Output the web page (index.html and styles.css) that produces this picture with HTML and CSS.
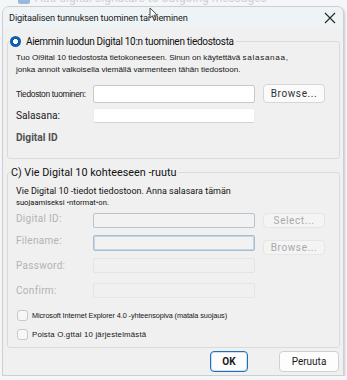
FILE: index.html
```html
<!DOCTYPE html>
<html lang="fi">
<head>
  <meta charset="UTF-8">
  <title>Digitaalisen tunnuksen tuominen tai vieminen</title>
  <link rel="stylesheet" href="styles.css">
</head>
<body>

<div class="behind">
  <span class="behind-box"></span>
  <span class="behind-text">Add digital signature to outgoing messages</span>
</div>

<div class="window">
  <div class="titlebar">
    <span class="title">Digitaalisen tunnuksen tuominen tai vieminen</span>
    <svg class="close" width="12" height="12" viewBox="0 0 12 12">
      <path d="M1 1 L11 11 M11 1 L1 11" stroke="#2b2b2b" stroke-width="1.2" fill="none"/>
    </svg>
  </div>

  <div class="content">
    <fieldset class="group group-import">
      <legend class="legend legend-radio">
        <span class="radio"></span>
        Aiemmin luodun Digital 10:n tuominen tiedostosta
      </legend>
      <p class="desc">Tuo Oi9ital 10 tiedostosta tietokoneeseen. Sinun on käytettävä <span class="spaced">salasanaa,</span><br>
      jonka annoit valkoisella viemällä varmenteen tähän tiedostoon.</p>

      <div class="row row-file">
        <label class="lbl lbl-small">Tiedoston tuominen:</label>
        <span class="field field-file"></span>
        <span class="btn">Browse...</span>
      </div>
      <div class="row row-pass">
        <label class="lbl">Salasana:</label>
        <span class="field field-pass"></span>
      </div>
      <div class="subhead">Digital ID</div>
    </fieldset>

    <fieldset class="group group-export">
      <legend class="legend legend-plain">C) Vie Digital 10 kohteeseen -ruutu</legend>
      <p class="desc2">Vie Digital 10 -tiedot tiedostoon. Anna salasara tämän</p>
      <p class="desc3">suojaamiseksi •ntormat•on.</p>

      <div class="row row-id">
        <label class="lbl lbl-off">Digital ID:</label>
        <span class="field field-id"></span>
        <span class="btn btn-off">Select...</span>
      </div>
      <div class="row row-name">
        <label class="lbl lbl-off">Filename:</label>
        <span class="field field-name"></span>
        <span class="btn btn-off btn-low">Browse...</span>
      </div>
      <div class="row row-pw">
        <label class="lbl lbl-off">Password:</label>
        <span class="field field-faint"></span>
      </div>
      <div class="row row-confirm">
        <label class="lbl lbl-off">Confirm:</label>
        <span class="field field-faint"></span>
      </div>

      <div class="check check-first">
        <span class="box"></span>
        <span>Microsoft Internet Explorer 4.0 -yhteensopiva (matala suojaus)</span>
      </div>
      <div class="check check-second">
        <span class="box"></span>
        <span class="check-wide">Poista O.gttal 10 järjestelmästä</span>
      </div>
    </fieldset>

    <div class="footer">
      <span class="action action-ok">OK</span>
      <span class="action">Peruuta</span>
    </div>
  </div>
</div>

<svg class="cursor" width="10" height="14" viewBox="0 0 10 14">
  <path d="M1 1 L1 11 L3.5 8.8 L5.5 13 L7 12.3 L5 8.2 L8.4 8.2 Z" fill="#fafafa" stroke="#3a3a3a" stroke-width="0.9"/>
</svg>

</body>
</html>
```

FILE: styles.css
```css
body {
  margin: 0;
  background: #f5f6f7;
  font-family: Roboto, "Noto Sans", sans-serif;
  color: #1b1b1b;
  overflow: hidden;
}

.behind {
  height: 6px;
  overflow: hidden;
  display: flex;
  align-items: flex-start;
  gap: 5px;
  padding-left: 18px;
}

.behind-box {
  width: 12px;
  height: 10px;
  margin-top: -6px;
  background: #5b8fd0;
  border-radius: 2px;
  opacity: 0.6;
}

.behind-text {
  font-size: 12px;
  line-height: 12px;
  margin-top: -8px;
  color: #cfd2d5;
}

.window {
  margin: 0 3px 0 2px;
  height: 368px;
  background: #f0f0f0;
  border: 1px solid #cdd0d3;
  border-radius: 7px 7px 0 0;
  box-shadow: 1px 1px 2px rgba(0, 0, 0, 0.18);
  overflow: hidden;
}

.titlebar {
  height: 21px;
  background: #eef3f6;
  display: flex;
  align-items: center;
  justify-content: space-between;
  padding: 0 6px 0 6px;
}

.title {
  font-size: 9.2px;
  letter-spacing: -0.15px;
  color: #1a1a1a;
}

.close {
  margin-right: 1px;
}

.content {
  padding: 0 3px 0 4px;
}

.group {
  margin: 6px 0 0 0;
  padding: 0 8px 0 8px;
  border: 1px solid #dadada;
  border-radius: 3px;
  min-width: 0;
}

.legend {
  display: flex;
  align-items: center;
  height: 14px;
  padding: 0 2px 0 0;
  font-size: 10px;
  letter-spacing: -0.3px;
  color: #111;
}

.legend-radio {
  margin-left: -6px;
  gap: 5px;
}

.legend-plain {
  margin-left: -5px;
  font-size: 10.8px;
  letter-spacing: 0;
}

.radio {
  width: 11px;
  height: 11px;
  border-radius: 50%;
  background: radial-gradient(circle, #ffffff 0 2.2px, #0c5fae 2.8px);
}

.desc {
  margin: 4px 0 0 0;
  font-family: "Liberation Sans", Arial, sans-serif;
  font-size: 8.1px;
  line-height: 12px;
  color: #151515;
}

.spaced {
  letter-spacing: 0.7px;
}

.row {
  display: grid;
  grid-template-columns: 69px 162px 62px;
  column-gap: 8px;
  align-items: center;
}

.lbl {
  font-size: 10.2px;
  color: #1a1a1a;
  white-space: nowrap;
}

.lbl-small {
  font-family: "Liberation Sans", Arial, sans-serif;
  font-size: 8.4px;
  letter-spacing: -0.3px;
}

.lbl-off {
  font-size: 10px;
  color: #b3b3b3;
  letter-spacing: 0.3px;
}

.field {
  display: block;
  box-sizing: border-box;
  background: #ffffff;
  border: 1px solid #c9c9c9;
  border-radius: 2px;
}

.row-file {
  margin-top: 8px;
}

.field-file {
  height: 18px;
}

.row-pass {
  margin-top: 5px;
}

.field-pass {
  height: 15px;
  border-color: #ececec;
  border-bottom-color: #d3d3d3;
}

.btn {
  display: flex;
  align-items: center;
  justify-content: center;
  box-sizing: border-box;
  height: 19px;
  background: #fbfbfb;
  border: 1px solid #d6d6d6;
  border-radius: 4px;
  font-size: 10px;
  letter-spacing: 0.6px;
  color: #303030;
}

.subhead {
  margin-top: 8px;
  height: 14px;
  line-height: 14px;
  font-size: 10.2px;
  font-weight: bold;
  color: #505050;
  margin-bottom: 13px;
}

.group-export {
  margin-top: 6px;
}

.desc2 {
  margin: 6px 0 0 0;
  font-size: 9px;
  line-height: 12px;
  color: #111;
}

.desc3 {
  margin: 0;
  font-size: 7.6px;
  line-height: 11px;
  color: #111;
}

.row-id {
  margin-top: 5px;
  align-items: start;
}

.field-id {
  height: 15px;
  background: #f2f2f2;
  border-color: #b9c3cc;
}

.btn-off {
  height: 15px;
  background: #f4f4f4;
  border-color: #e6e6e6;
  color: #a9a9a9;
}

.row-name {
  margin-top: 7px;
  align-items: start;
}

.field-name {
  height: 16px;
  background: #f2f2f2;
  border: 1px solid #a6bdd2;
  box-shadow: inset 0 0 0 1px #c8d6e3;
}

.btn-low {
  margin-top: 5px;
}

.row-pw {
  margin-top: 3px;
}

.field-faint {
  height: 15px;
  background: #f0f0f0;
  border-color: #e4e4e4;
}

.row-confirm {
  margin-top: 10px;
}

.check {
  display: flex;
  align-items: center;
  gap: 4px;
  height: 14px;
  padding-left: 1px;
  font-family: "Liberation Sans", Arial, sans-serif;
  font-size: 7.3px;
  letter-spacing: -0.1px;
  color: #151515;
}

.check-wide {
  font-size: 7.8px;
  letter-spacing: 0.2px;
}

.check-first {
  margin-top: 10px;
}

.check-second {
  margin-top: 5px;
  margin-bottom: 6px;
}

.box {
  box-sizing: border-box;
  width: 11px;
  height: 11px;
  border: 1px solid #c8c8c8;
  border-radius: 3px;
  background: #f7f7f7;
}

.footer {
  display: flex;
  justify-content: flex-end;
  gap: 31px;
  margin-top: 3px;
  padding-right: 1px;
}

.action {
  display: flex;
  align-items: center;
  justify-content: center;
  box-sizing: border-box;
  width: 60px;
  height: 21px;
  background: #fdfdfd;
  border: 1px solid #d0d0d0;
  border-radius: 4px;
  font-size: 10px;
  color: #1a1a1a;
}

.action-ok {
  width: 38px;
  border: 1px solid #1f6fc0;
  box-shadow: inset 0 0 0 1px #cfe0f2;
  font-weight: bold;
}

.cursor {
  position: absolute;
  left: 149px;
  top: 7px;
}
```
